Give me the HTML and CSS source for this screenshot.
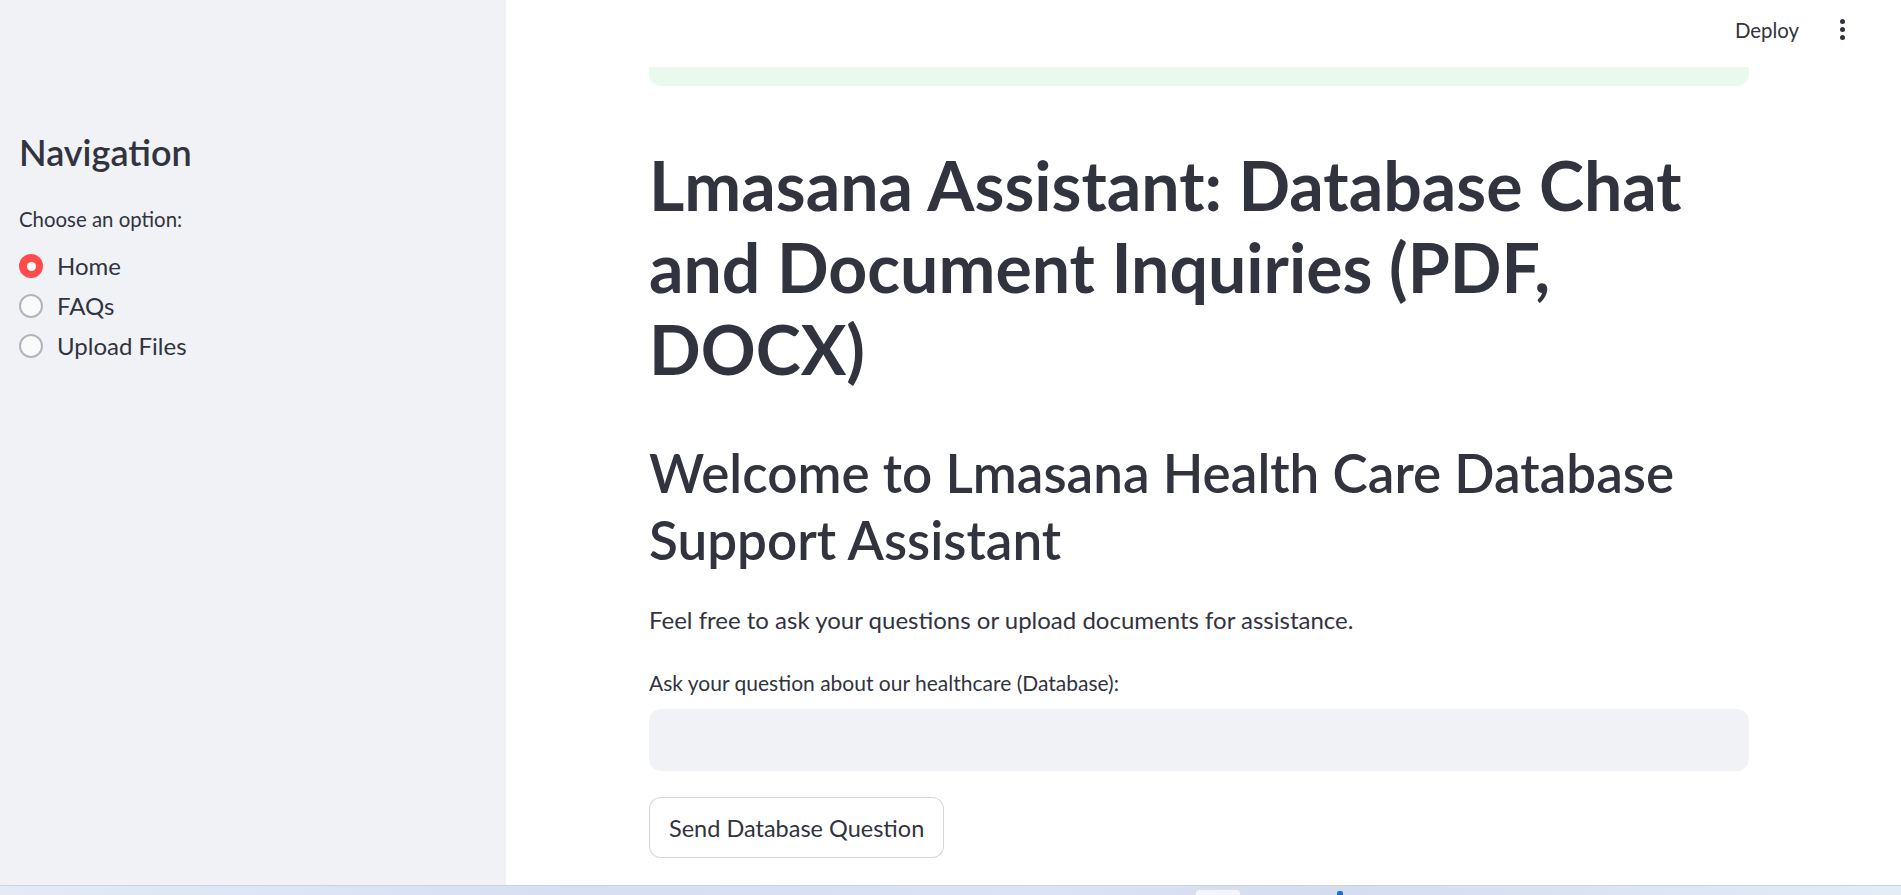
FILE: index.html
```html
<!DOCTYPE html>
<html lang="en">
<head>
<meta charset="utf-8">
<title>Lmasana Assistant</title>
<link rel="stylesheet" href="styles.css">
</head>
<body>
<div class="app">
  <div class="body-row">
    <aside class="sidebar">
      <h2 class="side-title">Navigation</h2>
      <div class="radio-label">Choose an option:</div>
      <div class="radio-group">
        <div class="radio checked"><span class="dot"></span><span class="radio-text">Home</span></div>
        <div class="radio"><span class="dot"></span><span class="radio-text">FAQs</span></div>
        <div class="radio"><span class="dot"></span><span class="radio-text">Upload Files</span></div>
      </div>
    </aside>
    <main class="main">
      <header class="topbar">
        <span class="deploy">Deploy</span>
        <span class="kebab"><i></i><i></i><i></i></span>
      </header>
      <div class="content">
        <div class="success"></div>
        <h1 class="title">Lmasana Assistant: Database Chat and Document Inquiries (PDF, DOCX)</h1>
        <h2 class="subtitle">Welcome to Lmasana Health Care Database Support Assistant</h2>
        <p class="para">Feel free to ask your questions or upload documents for assistance.</p>
        <div class="field-label">Ask your question about our healthcare (Database):</div>
        <div class="input"></div>
        <button class="btn">Send Database Question</button>
      </div>
    </main>
  </div>
  <div class="taskbar">
    <span class="tb-icon"></span>
    <span class="tb-dot"></span>
  </div>
</div>
</body>
</html>
```

FILE: styles.css
```css
* { box-sizing: border-box; }
html, body { margin: 0; padding: 0; }
body {
  font-family: "Lato", "Source Sans Pro", "Noto Sans", sans-serif;
  color: #31333f;
  background: #ffffff;
}
.app {
  height: 895px;
  display: flex;
  flex-direction: column;
  overflow: hidden;
}
.body-row {
  flex: 1;
  display: flex;
  min-height: 0;
}
.sidebar {
  width: 506px;
  flex: 0 0 506px;
  background: #f0f2f6;
  padding: 131px 20px 0 19px;
}
.side-title {
  margin: 0;
  font-size: 36px;
  line-height: 43px;
  font-weight: 600;
  color: #31333f;
}
.radio-label {
  margin-top: 30px;
  font-size: 20.4px;
  line-height: 30px;
}
.radio-group {
  margin-top: 12px;
  display: flex;
  flex-direction: column;
}
.radio {
  height: 40px;
  display: flex;
  align-items: center;
  gap: 14px;
}
.dot {
  width: 24px;
  height: 24px;
  border-radius: 50%;
  border: 2px solid #b3b4bb;
  background: #fafafb;
  display: flex;
  align-items: center;
  justify-content: center;
}
.radio.checked .dot {
  border: none;
  background: #ff4b4b;
}
.radio.checked .dot::after {
  content: "";
  width: 9px;
  height: 9px;
  border-radius: 50%;
  background: #ffffff;
}
.radio-text {
  font-size: 24px;
  line-height: 30px;
}
.main {
  flex: 1;
  display: flex;
  flex-direction: column;
  background: #ffffff;
  min-width: 0;
}
.topbar {
  height: 67px;
  flex: 0 0 67px;
  display: flex;
  align-items: center;
  justify-content: flex-end;
  padding: 0 56px 8px 0;
}
.deploy {
  font-size: 20.4px;
  line-height: 30px;
  color: #31333f;
  margin-right: 41px;
}
.kebab {
  display: flex;
  flex-direction: column;
  gap: 3px;
  align-items: center;
}
.kebab i {
  display: block;
  width: 5px;
  height: 5px;
  border-radius: 50%;
  background: #31333f;
}
.content {
  width: 1100px;
  margin-left: 143px;
  display: flex;
  flex-direction: column;
  align-items: flex-start;
}
.success {
  width: 100%;
  height: 19px;
  background: #e8f9ee;
  border-radius: 0 0 12px 12px;
}
.title {
  margin: 58px 0 0;
  font-size: 68px;
  line-height: 82px;
  font-weight: 700;
  color: #31333f;
}
.subtitle {
  margin: 49px 0 0;
  font-size: 53px;
  line-height: 67px;
  font-weight: 600;
  color: #31333f;
}
.para {
  margin: 29px 0 0;
  font-size: 24px;
  line-height: 36px;
}
.field-label {
  margin-top: 30px;
  font-size: 21px;
  line-height: 30px;
}
.input {
  margin-top: 11px;
  width: 100%;
  height: 62px;
  background: #f0f2f6;
  border-radius: 12px;
}
.btn {
  margin-top: 26px;
  height: 61px;
  padding: 0 19px;
  background: #ffffff;
  border: 1px solid rgba(49, 51, 63, 0.2);
  border-radius: 12px;
  font-family: inherit;
  font-size: 23.5px;
  color: #31333f;
}
.taskbar {
  height: 10px;
  flex: 0 0 10px;
  background: linear-gradient(90deg, #e2ebf6 0%, #d6e0f2 30%, #dbe3f4 55%, #d5dcef 70%, #e3edf8 100%);
  border-top: 1px solid #c9d2e2;
  position: relative;
}
.tb-icon {
  position: absolute;
  left: 1195px;
  top: 3px;
  width: 46px;
  height: 12px;
  border-radius: 4px;
  background: #f4f6fb;
  border: 1px solid #d8deea;
}
.tb-dot {
  position: absolute;
  left: 1337px;
  top: 5px;
  width: 6px;
  height: 6px;
  border-radius: 2px;
  background: #1a6fd6;
}
```
